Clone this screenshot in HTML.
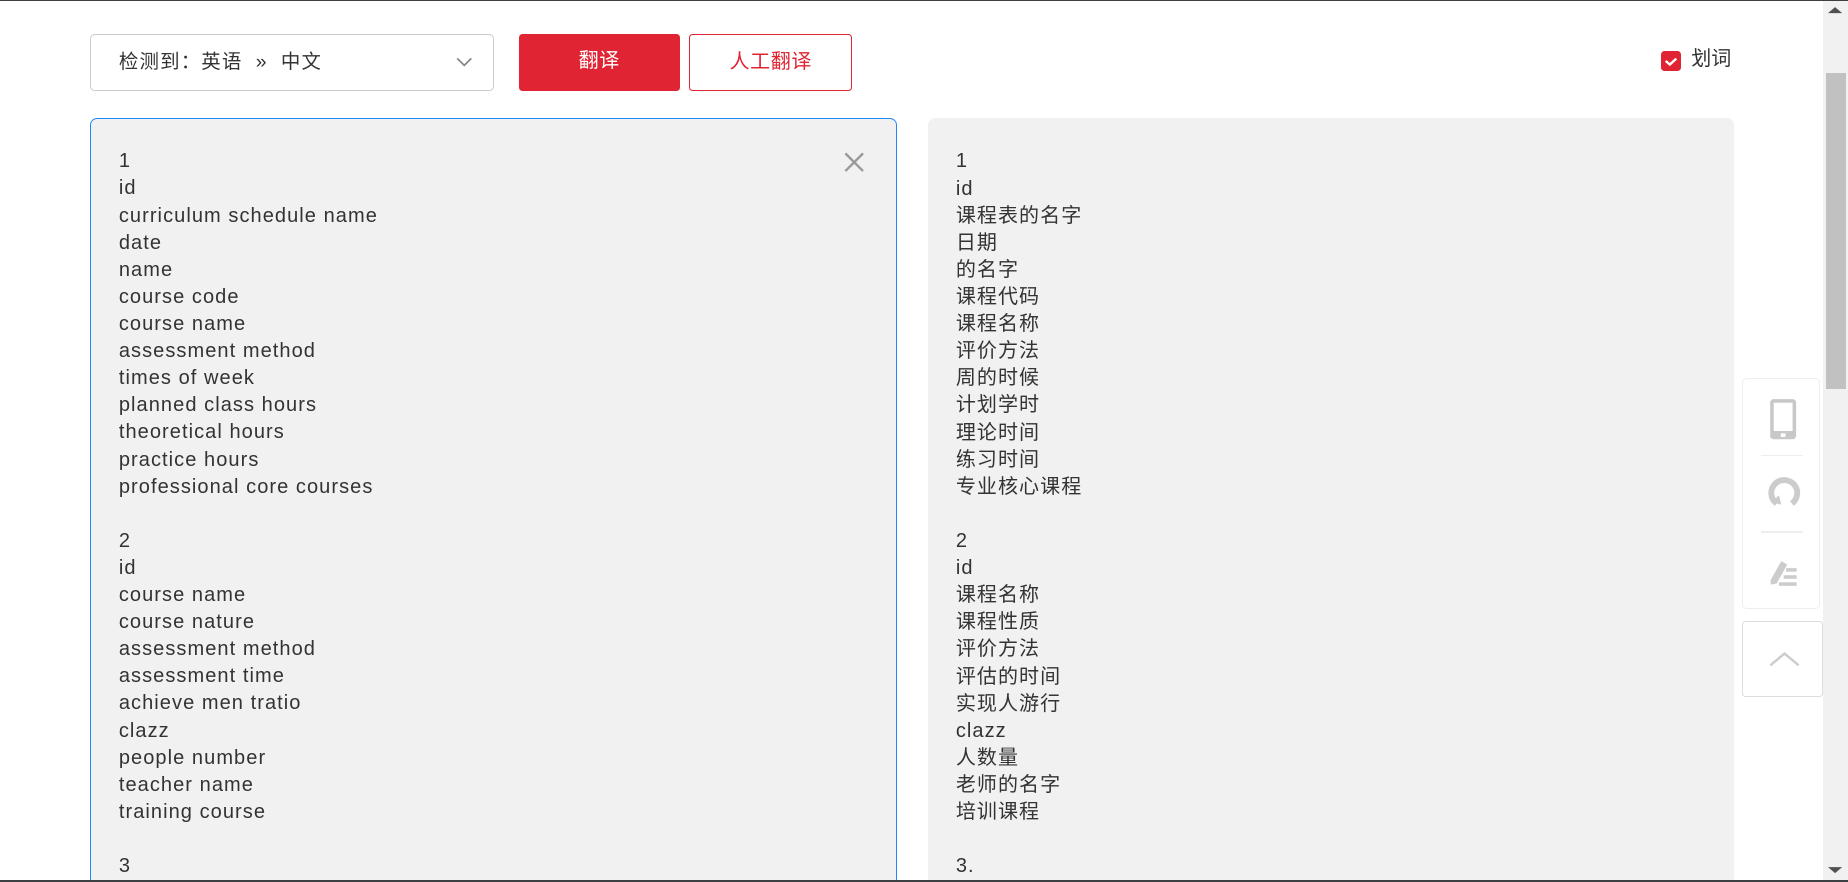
<!DOCTYPE html>
<html><head><meta charset="utf-8"><style>
html{zoom:1.17857}
body{margin:0;width:1568px;height:748px;overflow:hidden;background:#fff;font-family:"Liberation Sans","Noto Sans CJK SC",sans-serif;color:#333;position:relative}
.a{position:absolute;box-sizing:border-box}
.sel{left:76px;top:29px;width:343px;height:48px;border:1px solid #ccc;border-radius:4px;font-size:16.5px;letter-spacing:1px;line-height:46px;padding-left:24px;color:#333}
.btn{top:29px;height:48px;border-radius:3px;font-size:17px;letter-spacing:0.5px;line-height:46px;text-align:center}
.panel{top:100px;height:647px;background:#f1f1f1;border-radius:6px 6px 0 0;font-size:17px;letter-spacing:0.9px;line-height:23px;padding-top:25px;white-space:pre;overflow:hidden}
</style></head><body>
<div class="a" style="left:0;top:0;width:1568px;height:1px;background:#3c4043"></div>
<div class="a sel">检测到：英语 &nbsp;» &nbsp;中文
<svg class="a" style="left:310px;top:18px" width="14" height="10" viewBox="0 0 14 10"><path d="M1 2l6 6 6-6" fill="none" stroke="#888" stroke-width="1.5"/></svg></div>
<div class="a btn" style="left:440px;width:137px;background:#e02433;color:#fff">翻译</div>
<div class="a btn" style="left:585px;width:138px;border:1px solid #e02433;color:#e02433">人工翻译</div>
<div class="a" style="left:1409px;top:43px;width:17px;height:17px;border-radius:3px;background:#e02433"><svg width="17" height="17"><path d="M4 8.5l3.5 3 5.5-5" fill="none" stroke="#fff" stroke-width="2"/></svg></div>
<div class="a" style="left:1435px;top:40px;font-size:17px;line-height:22px;color:#333">划词</div>
<div class="a panel" style="left:76px;width:685px;border:1px solid #1f87f5;border-bottom:none;padding-left:24px">1
id
curriculum schedule name
date
name
course code
course name
assessment method
times of week
planned class hours
theoretical hours
practice hours
professional core courses

2
id
course name
course nature
assessment method
assessment time
achieve men tratio
clazz
people number
teacher name
training course

3</div>
<svg class="a" style="left:715px;top:128px" width="19" height="19"><path d="M2 2l15 15M17 2L2 17" stroke="#999" stroke-width="2"/></svg>
<div class="a panel" style="left:787px;width:684px;padding-left:24px;padding-top:26px">1
id
课程表的名字
日期
的名字
课程代码
课程名称
评价方法
周的时候
计划学时
理论时间
练习时间
专业核心课程

2
id
课程名称
课程性质
评价方法
评估的时间
实现人游行
clazz
人数量
老师的名字
培训课程

3.</div>
<div class="a" style="left:1478px;top:321px;width:66px;height:196px;border:1px solid #eee;border-radius:4px;background:#fff">
<svg class="a" style="left:22px;top:16px" width="24" height="36"><rect x="1" y="1" width="22" height="34" rx="3" fill="#c8c8c8"/><rect x="4" y="4" width="16" height="24" fill="#fff"/><rect x="10" y="30" width="4" height="3" fill="#fff"/></svg>
<div class="a" style="left:15px;top:64px;width:36px;height:1px;background:#eee"></div>
<svg class="a" style="left:20px;top:80px" width="30" height="30"><path d="M9 25A11 11 0 1 1 22 25" fill="none" stroke="#ccc" stroke-width="5"/><path d="M4 24l7-6 2 8z" fill="#ccc"/></svg>
<div class="a" style="left:15px;top:129px;width:36px;height:1px;background:#eee"></div>
<svg class="a" style="left:20px;top:148px" width="30" height="28"><path d="M4 22l9-16 5 3-9 16-5 1z" fill="#ccc"/><rect x="17" y="12" width="9" height="3" fill="#ccc"/><rect x="15" y="18" width="11" height="3" fill="#ccc"/><rect x="11" y="24" width="15" height="3" fill="#ccc"/></svg>
</div>
<div class="a" style="left:1478px;top:527px;width:69px;height:64px;border:1px solid #ddd;border-radius:3px;background:#fff">
<svg class="a" style="left:21px;top:24px" width="28" height="16"><path d="M2 13L14 3l12 10" fill="none" stroke="#ccc" stroke-width="2"/></svg></div>
<div class="a" style="left:1547px;top:1px;width:21px;height:746px;background:#f1f1f1"></div>
<div class="a" style="left:1549px;top:62px;width:17px;height:268px;background:#c1c1c1"></div>
<svg class="a" style="left:1551px;top:5px" width="12" height="8"><path d="M0 6L6 1l6 5z" fill="#505050"/></svg>
<svg class="a" style="left:1551px;top:735px" width="12" height="8"><path d="M0 1L6 6l6-5z" fill="#505050"/></svg>
<div class="a" style="left:0;top:747px;width:1568px;height:1px;background:#3c4043"></div>
</body></html>
